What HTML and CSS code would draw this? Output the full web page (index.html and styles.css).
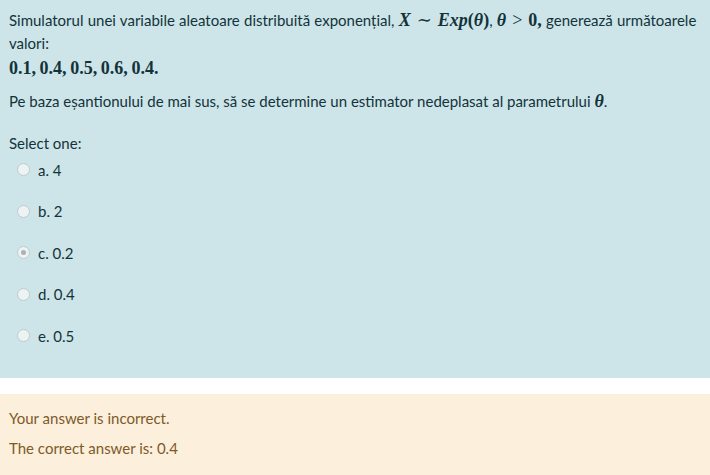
FILE: index.html
```html
<!DOCTYPE html>
<html lang="ro">
<head>
<meta charset="utf-8">
<link rel="stylesheet" href="styles.css">
</head>
<body>
<div class="formulation">
  <div class="qtext">
    <p class="intro">Simulatorul unei variabile aleatoare distribuită exponențial, <span class="m"><i>X</i><span class="rel">∼</span><i>Exp</i>(<i>θ</i>)</span>, <span class="m"><i>θ</i><span class="rel">&gt;</span>0,</span> generează următoarele valori:</p>
    <p class="data"><span class="m">0.1,&#8201;0.4,&#8201;0.5,&#8201;0.6,&#8201;0.4.</span></p>
    <p class="ask">Pe baza eșantionului de mai sus, să se determine un estimator nedeplasat al parametrului <span class="m"><i>θ</i></span>.</p>
  </div>
  <div class="prompt">Select one:</div>
  <div class="answers">
    <div class="opt"><span class="radio"></span><span>a. 4</span></div>
    <div class="opt"><span class="radio"></span><span>b. 2</span></div>
    <div class="opt"><span class="radio checked"></span><span>c. 0.2</span></div>
    <div class="opt"><span class="radio"></span><span>d. 0.4</span></div>
    <div class="opt"><span class="radio"></span><span>e. 0.5</span></div>
  </div>
</div>
<div class="outcome">
  <p>Your answer is incorrect.</p>
  <p>The correct answer is: 0.4</p>
</div>
</body>
</html>
```

FILE: styles.css
```css
html, body {
  margin: 0;
  padding: 0;
  background: #ffffff;
}
body {
  font-family: "Lato", "Open Sans", sans-serif;
  font-size: 15px;
  line-height: 22.5px;
}
p { margin: 0; }
.formulation {
  background: #cde5e9;
  color: #13333a;
  height: 378px;
  box-sizing: border-box;
  padding: 9px 9px 0 9px;
}
.intro { word-spacing: 0.4px; }
.m {
  font-family: "Liberation Serif", "DejaVu Serif", serif;
  font-weight: bold;
  font-size: 18px;
  line-height: 0;
  word-spacing: 0;
}
.m i { font-style: italic; }
.rel { margin: 0 6px; font-weight: normal; }
.data { margin-top: 3px; }
.ask { margin-top: 10px; }
.prompt { margin-top: 20px; }
.answers {
  display: flex;
  flex-direction: column;
  gap: 19px;
  margin-top: 4px;
}
.opt {
  display: flex;
  align-items: center;
  gap: 8px;
  padding-left: 8px;
}
.radio {
  flex: none;
  width: 11px;
  height: 11px;
  border-radius: 50%;
  background: #edf2f3;
  border: 1px solid #bfcbce;
  position: relative;
}
.radio.checked::after {
  content: "";
  position: absolute;
  left: 3px;
  top: 3px;
  width: 5px;
  height: 5px;
  border-radius: 50%;
  background: #a9b2b5;
}
.outcome {
  margin-top: 16px;
  background: #fcefdc;
  color: #7d5a29;
  height: 81px;
  box-sizing: border-box;
  padding: 13px 9px 0 9px;
}
.outcome p + p { margin-top: 7.5px; }
```
